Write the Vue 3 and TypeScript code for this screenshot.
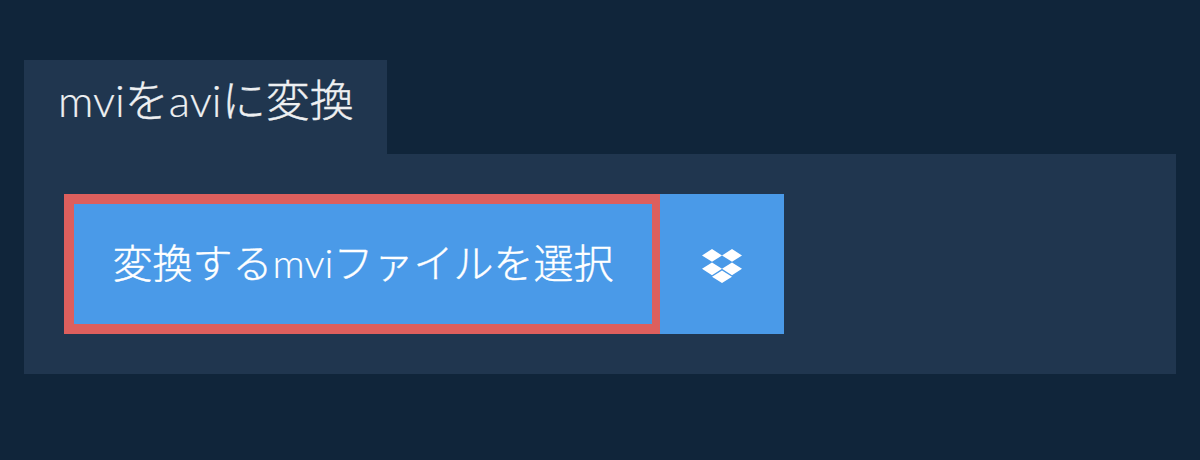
<script setup lang="ts">
const title = [
  { text: 'mvi', latin: true },
  { text: 'を', latin: false },
  { text: 'avi', latin: true },
  { text: 'に変換', latin: false },
]
const label = [
  { text: '変換する', latin: false },
  { text: 'mvi', latin: true },
  { text: 'ファイルを選択', latin: false },
]
</script>

<template>
  <main class="page">
    <h1 class="tab">
      <span v-for="part in title" :key="part.text" :class="part.latin ? 'latin' : 'cjk'">{{ part.text }}</span>
    </h1>
    <section class="panel">
      <button class="choose" type="button">
        <span v-for="part in label" :key="part.text" :class="part.latin ? 'latin' : 'cjk'">{{ part.text }}</span>
      </button>
      <button class="dropbox" type="button" aria-label="Dropbox">
        <svg width="40" height="34" viewBox="0 0 40 34">
          <path fill="#fff" d="M10 0 20 6.4 10 12.8 0 6.4ZM30 0 40 6.4 30 12.8 20 6.4ZM10 13.4 20 19.8 10 26.2 0 19.8ZM30 13.4 40 19.8 30 26.2 20 19.8ZM20 21.4 30 27.8 20 34 10 27.8Z"/>
        </svg>
      </button>
    </section>
  </main>
</template>

<style>
html, body { margin: 0; background: #10253a; }
</style>

<style scoped>
.page {
  box-sizing: border-box;
  width: 1200px;
  height: 460px;
  padding: 60px 24px 0;
  background: #10253a;
  font-family: Lato, "Noto Sans CJK JP", sans-serif;
}
.tab {
  box-sizing: border-box;
  width: 363px;
  height: 94px;
  margin: 0;
  padding: 12px 0 0 34px;
  background: #20364f;
  color: #eef0f2;
  font-size: 44px;
  line-height: 56px;
  font-weight: 300;
  white-space: nowrap;
}
.latin {
  font-weight: 300;
  -webkit-text-stroke: 0.2px currentColor;
}
.cjk {
  font-weight: 300;
  -webkit-text-stroke: 0.4px currentColor;
}
.panel {
  display: flex;
  height: 220px;
  box-sizing: border-box;
  padding: 40px;
  background: #20364f;
}
.choose, .dropbox {
  height: 140px;
  border: 0;
  padding: 0;
  background: #4a9ae8;
  color: #fff;
  font-family: inherit;
}
.choose {
  box-sizing: border-box;
  width: 596px;
  border: 10px solid #dd5f5d;
  border-right-width: 8px;
  padding-bottom: 6px;
  font-size: 40px;
  white-space: nowrap;
}
.dropbox {
  display: flex;
  align-items: center;
  justify-content: center;
  width: 124px;
  padding-top: 4px;
}
</style>
